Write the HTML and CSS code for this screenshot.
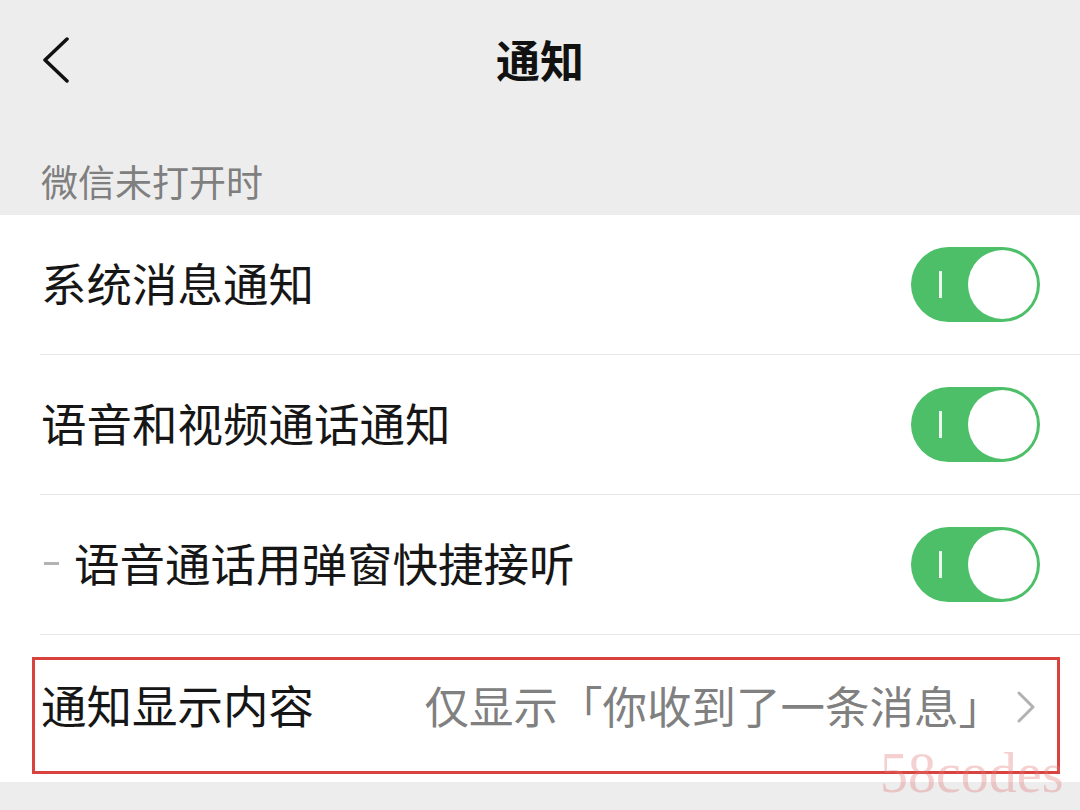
FILE: index.html
```html
<!DOCTYPE html>
<html lang="zh-CN">
<head>
<meta charset="utf-8">
<link rel="stylesheet" href="styles.css">
</head>
<body>
<div class="page">
  <header class="nav">
    <svg class="back" width="30" height="46" viewBox="0 0 30 46"><path d="M26 2 L4 23 L26 44" fill="none" stroke="#111" stroke-width="3.5" stroke-linecap="round" stroke-linejoin="round"/></svg>
    <h1 class="title">通知</h1>
  </header>
  <div class="section-title">微信未打开时</div>
  <ul class="list">
    <li class="row">
      <span class="label">系统消息通知</span>
      <span class="toggle"><span class="mark"></span><span class="knob"></span></span>
    </li>
    <li class="row">
      <span class="label">语音和视频通话通知</span>
      <span class="toggle"><span class="mark"></span><span class="knob"></span></span>
    </li>
    <li class="row">
      <span class="label"><span class="dash"></span>语音通话用弹窗快捷接听</span>
      <span class="toggle"><span class="mark"></span><span class="knob"></span></span>
    </li>
    <li class="row row-last">
      <span class="label">通知显示内容</span>
      <span class="value">仅显示「你收到了一条消息」</span>
      <svg class="chev" width="18" height="32" viewBox="0 0 18 32"><path d="M2 2 L16 16 L2 30" fill="none" stroke="#b2b2b2" stroke-width="3" stroke-linecap="round" stroke-linejoin="round"/></svg>
      <span class="highlight"></span>
    </li>
  </ul>
  <div class="watermark">58codes</div>
</div>
</body>
</html>
```
FILE: styles.css
```css
* { box-sizing: border-box; }
html, body { margin: 0; padding: 0; }
body {
  background: #ededed;
  font-family: "Noto Sans CJK SC", "Noto Sans", sans-serif;
  width: 1080px;
  height: 810px;
  overflow: hidden;
}
.page { position: relative; width: 1080px; height: 810px; }
.nav {
  height: 120px;
  display: flex;
  align-items: center;
  justify-content: center;
  position: relative;
}
.back { position: absolute; left: 41px; top: 37px; }
.title {
  margin: 0;
  font-size: 44px;
  font-weight: 600;
  color: #111;
  line-height: 1;
  margin-top: -2px;
}
.section-title {
  height: 95px;
  padding-left: 41px;
  font-size: 37px;
  color: #7f7f7f;
  line-height: 1;
  padding-top: 43px;
}
.list {
  list-style: none;
  margin: 0;
  padding: 0;
  background: #fff;
}
.row {
  height: 140px;
  margin-left: 40px;
  padding-right: 40px;
  display: flex;
  align-items: center;
  border-bottom: 1.5px solid #e8e8e8;
  position: relative;
}
.row-last { height: 147px; border-bottom: none; padding-bottom: 4px; }
.label {
  font-size: 45.5px;
  font-weight: 400;
  color: #161616;
  line-height: 1;
  display: flex;
  align-items: center;
  padding-left: 1px;
  margin-top: -3px;
}
.dash {
  display: inline-block;
  width: 15px;
  height: 3px;
  background: #b3b3b3;
  margin-left: 3px;
  margin-right: 15px;
}
.toggle {
  margin-left: auto;
  width: 129px;
  height: 75px;
  border-radius: 38px;
  background: #4cbf68;
  position: relative;
}
.mark {
  position: absolute;
  left: 28px;
  top: 24px;
  width: 3px;
  height: 27px;
  background: #eaf7ee;
}
.knob {
  position: absolute;
  right: 3px;
  top: 3px;
  width: 69px;
  height: 69px;
  border-radius: 50%;
  background: #fff;
}
.value {
  margin-left: auto;
  font-size: 44.5px;
  color: #808080;
  line-height: 1;
  margin-right: 14px;
  margin-top: -3px;
}
.chev { margin-right: 5px; }
.highlight {
  position: absolute;
  left: -8px;
  right: 20px;
  top: 22px;
  bottom: 8px;
  border: 3px solid #d8433f;
  pointer-events: none;
}
.watermark {
  position: absolute;
  left: 880px;
  top: 745px;
  font-family: "Liberation Serif", serif;
  font-size: 56px;
  color: rgba(226, 120, 120, 0.35);
  line-height: 1;
}
```
